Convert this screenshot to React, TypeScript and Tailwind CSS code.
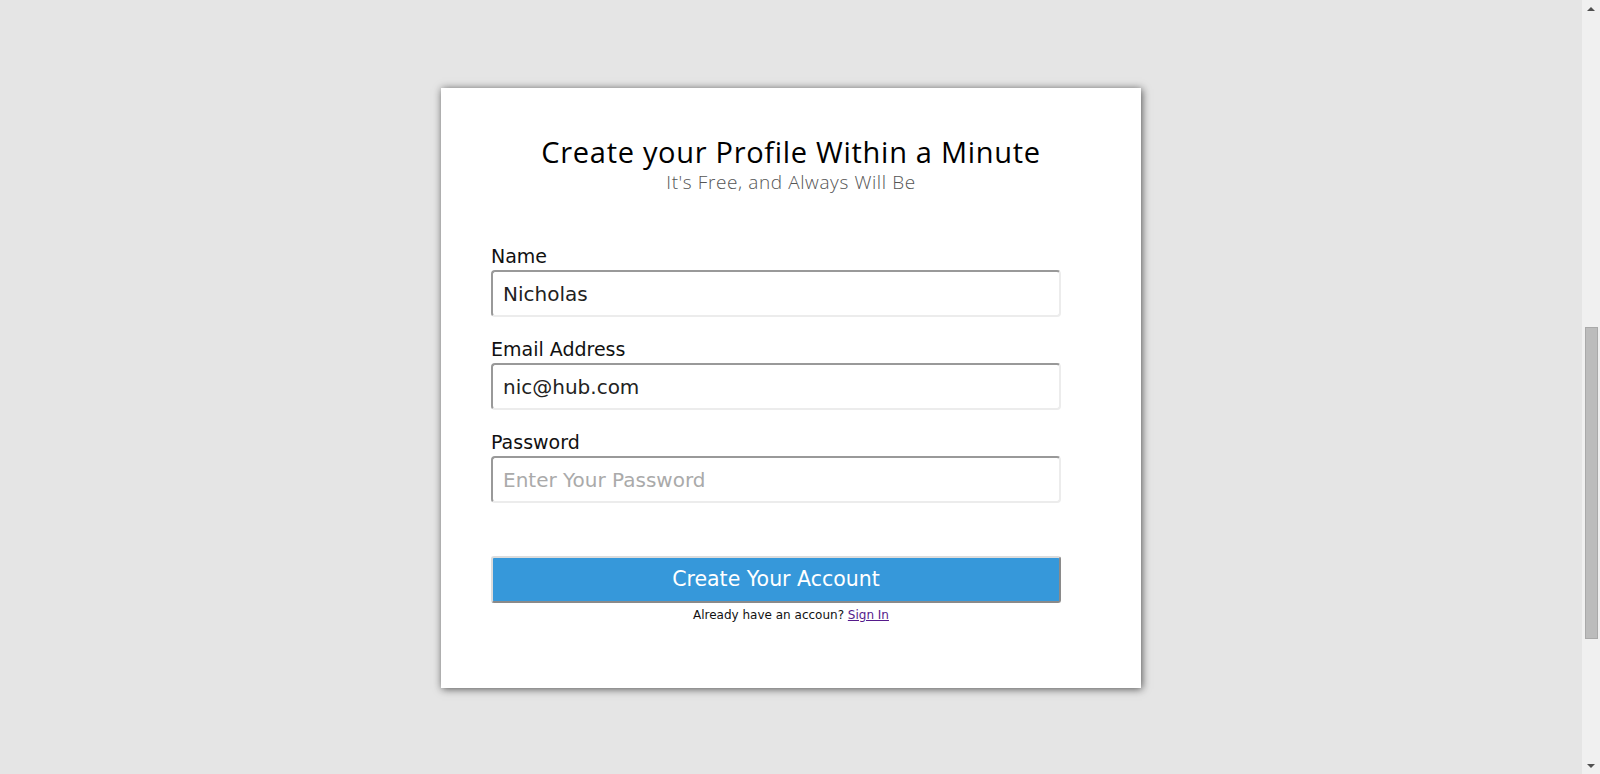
import { useState } from "react";

const gothic = "font-['DejaVu_Sans',sans-serif]";

function Field({
  label,
  value,
  placeholder,
  type = "text",
  onChange,
}: {
  label: string;
  value: string;
  placeholder?: string;
  type?: string;
  onChange: (v: string) => void;
}) {
  return (
    <div className="flex flex-col">
      <label className={`${gothic} text-[19px] leading-[22px] text-[#111]`}>{label}</label>
      <input
        type={type}
        value={value}
        placeholder={placeholder}
        onChange={(e) => onChange(e.target.value)}
        className={`${gothic} mt-[3px] h-[47px] w-full rounded-[4px] border-2 border-t-[#999] border-l-[#999] border-r-[#ececec] border-b-[#ececec] bg-white px-[10px] text-[20px] text-[#222] outline-none placeholder:text-[#aaa]`}
      />
    </div>
  );
}

function Scrollbar() {
  return (
    <div className="flex h-full w-[18px] shrink-0 flex-col items-center bg-[#f0f0f0]">
      <div className="flex h-[17px] w-full items-center justify-center">
        <div className="h-0 w-0 border-x-[4px] border-b-[4px] border-x-transparent border-b-[#505050]" />
      </div>
      <div className="h-[310px]" />
      <div className="h-[312px] w-[13px] border border-[#a9a9a9] bg-[#bcbcbc]" />
      <div className="flex-1" />
      <div className="flex h-[17px] w-full items-center justify-center">
        <div className="h-0 w-0 border-x-[4px] border-t-[4px] border-x-transparent border-t-[#505050]" />
      </div>
    </div>
  );
}

export default function App() {
  const [name, setName] = useState("Nicholas");
  const [email, setEmail] = useState("nic@hub.com");
  const [password, setPassword] = useState("");

  return (
    <div className="flex h-[774px] w-full overflow-hidden bg-[#e5e5e5]">
      <main className="flex flex-1 justify-center pt-[88px]">
        <div className="flex h-[600px] w-[700px] flex-col bg-white pt-[47px] shadow-[1px_1px_8px_rgba(0,0,0,0.65)]">
          <div className="text-center font-['Open_Sans',sans-serif]">
            <h1 className="text-[29px] leading-[34px] tracking-[0.7px] text-black">Create your Profile Within a Minute</h1>
            <p className="mt-[2px] text-[19px] font-light leading-[22px] tracking-[0.6px] text-[#555]">
              It's Free, and Always Will Be
            </p>
          </div>

          <form className="ml-[50px] mt-[52px] flex w-[570px] flex-col gap-[21px]" onSubmit={(e) => e.preventDefault()}>
            <Field label="Name" value={name} onChange={setName} />
            <Field label="Email Address" value={email} onChange={setEmail} />
            <Field
              label="Password"
              type="password"
              value={password}
              placeholder="Enter Your Password"
              onChange={setPassword}
            />
            <button
              type="submit"
              className={`${gothic} mt-[32px] h-[47px] w-full rounded-[3px] border-2 border-t-[#dcdcdc] border-l-[#dcdcdc] border-r-[#8a8a8a] border-b-[#8a8a8a] bg-[#3698da] text-[20.5px] text-white`}
            >
              Create Your Account
            </button>
          </form>

          <p className={`${gothic} mt-[4px] text-center text-[12px] leading-[16px] text-[#111]`}>
            Already have an accoun?{" "}
            <a href="#" className="text-[#551a8b] underline">
              Sign In
            </a>
          </p>
        </div>
      </main>
      <Scrollbar />
    </div>
  );
}
